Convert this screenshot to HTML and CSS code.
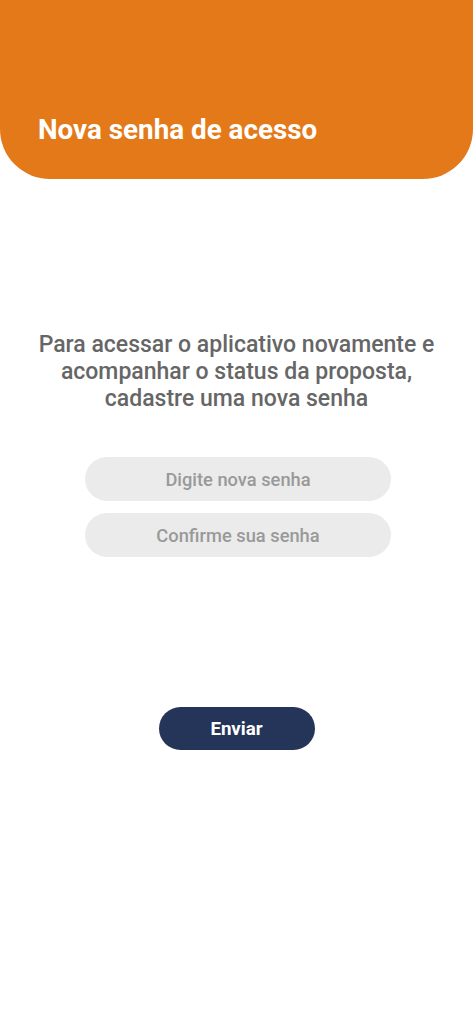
FILE: index.html
```html
<!DOCTYPE html>
<html lang="pt">
<head>
<meta charset="utf-8">
<link rel="stylesheet" href="styles.css">
</head>
<body>
<header class="header">
  <h1 class="title">Nova senha de acesso</h1>
</header>
<main class="content">
  <p class="intro">Para acessar o aplicativo novamente e acompanhar o status da proposta, cadastre uma nova senha</p>
  <div class="fields">
    <div class="field">Digite nova senha</div>
    <div class="field">Confirme sua senha</div>
  </div>
  <button class="send">Enviar</button>
</main>
</body>
</html>
```
FILE: styles.css
```css
* { box-sizing: border-box; }
html, body { margin: 0; padding: 0; background: #fff; }
body { font-family: Roboto, "Liberation Sans", sans-serif; width: 473px; }
.header {
  height: 179px;
  background: #E47919;
  border-radius: 0 0 50px 50px;
  padding: 114px 0 0 38px;
}
.title {
  margin: 0;
  color: #fff;
  font-size: 27.8px;
  font-weight: 700;
  line-height: 32px;
}
.content {
  display: flex;
  flex-direction: column;
  align-items: center;
}
.intro {
  margin: 152px 0 0;
  color: #666;
  font-size: 23px;
  font-weight: 500;
  line-height: 27px;
  text-align: center;
  width: 440px;
}
.fields {
  margin-top: 45px;
  margin-left: 3px;
  display: flex;
  flex-direction: column;
  gap: 12px;
}
.field {
  width: 306px;
  height: 44px;
  border-radius: 22px;
  background: #EBEBEB;
  color: #999;
  font-size: 18.3px;
  font-weight: 500;
  display: flex;
  align-items: center;
  justify-content: center;
}
.send {
  margin-top: 150px;
  width: 156px;
  height: 43px;
  border: none;
  border-radius: 22px;
  background: #253459;
  color: #fff;
  font-family: Roboto, "Liberation Sans", sans-serif;
  font-size: 18.7px;
  font-weight: 700;
}
```
